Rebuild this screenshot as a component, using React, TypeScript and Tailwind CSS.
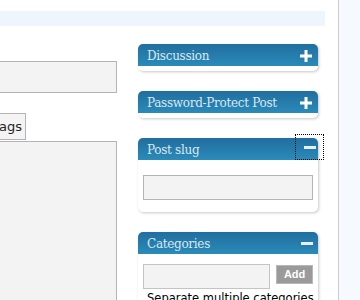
import { ReactNode } from 'react';

interface BoxProps {
  title: string;
  open?: boolean;
  focused?: boolean;
  children?: ReactNode;
}

function Plus() {
  return (
    <svg width="12" height="12" viewBox="0 0 12 12" className="block">
      <rect x="4.5" y="0" width="3" height="12" fill="#fff" />
      <rect x="0" y="4.5" width="12" height="3" fill="#fff" />
    </svg>
  );
}

function Minus() {
  return (
    <svg width="12" height="3" viewBox="0 0 12 3" className="block">
      <rect x="0" y="0" width="12" height="3" fill="#e8f0f6" />
    </svg>
  );
}

function SideBox({ title, open, focused, children }: BoxProps) {
  return (
    <div className="w-[180px] bg-white rounded-[5px] shadow-[1px_1px_3px_rgba(0,0,0,0.22)]">
      <div className="relative h-[22px] flex items-center pl-[9px] pt-[1px] rounded-t-[5px] bg-gradient-to-b from-[#216e9f] to-[#2a8bb9] text-[#dce8f1] text-[12px] tracking-[-0.3px] font-['DejaVu_Serif',serif]">
        {title}
        {open ? (
          <div
            className={
              focused
                ? 'absolute right-[-6px] top-[-4px] w-[29px] h-[26px] border border-dotted border-black flex items-center justify-center pl-[1px] pt-[1px]'
                : 'absolute right-[5px] top-[10px]'
            }
          >
            <Minus />
          </div>
        ) : (
          <div className="absolute right-[6px] top-[6px]">
            <Plus />
          </div>
        )}
      </div>
      <div className={open ? 'px-[5px] pt-[15px] pb-[12px]' : 'h-[5px]'}>{children}</div>
    </div>
  );
}

export default function App() {
  return (
    <div className="w-[360px] h-[300px] overflow-hidden flex bg-white font-['DejaVu_Sans',sans-serif]">
      <div className="w-[338px] shrink-0 pt-[11px]">
        <div className="w-[325px] h-[15px] bg-[#eef5fc]" />
        <div className="flex gap-[21px]">
          <div className="w-[117px] shrink-0 pt-[35px]">
            <div className="h-[32px] bg-[#f3f3f3] border border-l-0 border-[#b4b4b4]" />
            <div className="mt-[20px] w-[26px] h-[27px] bg-[#f4f4f4] border border-l-0 border-[#b4b4b4] flex items-center justify-end pr-[3px] text-[13px] text-[#222] overflow-hidden">
              <span className="whitespace-nowrap">ags</span>
            </div>
            <div className="mt-[1px] h-[200px] bg-[#f3f3f3] border border-l-0 border-[#b4b4b4]" />
          </div>
          <div className="flex flex-col gap-[20px] pt-[18px]">
            <SideBox title="Discussion" />
            <SideBox title="Password-Protect Post" />
            <SideBox title="Post slug" open focused>
              <div className="h-[25px] bg-[#f3f3f3] border border-[#b4b4b4]" />
            </SideBox>
            <SideBox title="Categories" open>
              <div className="flex items-start gap-[6px] mt-[-5px]">
                <div className="w-[128px] h-[25px] bg-[#f3f3f3] border border-[#c4c4c4]" />
                <div className="mt-[1px] w-[37px] h-[19px] bg-[#9a9a9a] border border-[#b8b8b8] text-white text-[11px] font-bold font-['Liberation_Sans',sans-serif] flex items-center justify-center">
                  Add
                </div>
              </div>
              <div className="text-[11.5px] leading-[14px] text-black pl-[4px] mt-[2px] whitespace-nowrap">
                Separate multiple categories
              </div>
            </SideBox>
          </div>
        </div>
      </div>
      <div className="flex-1 border-l border-[#cbcbcb] bg-[#f6f9fd]" />
    </div>
  );
}
